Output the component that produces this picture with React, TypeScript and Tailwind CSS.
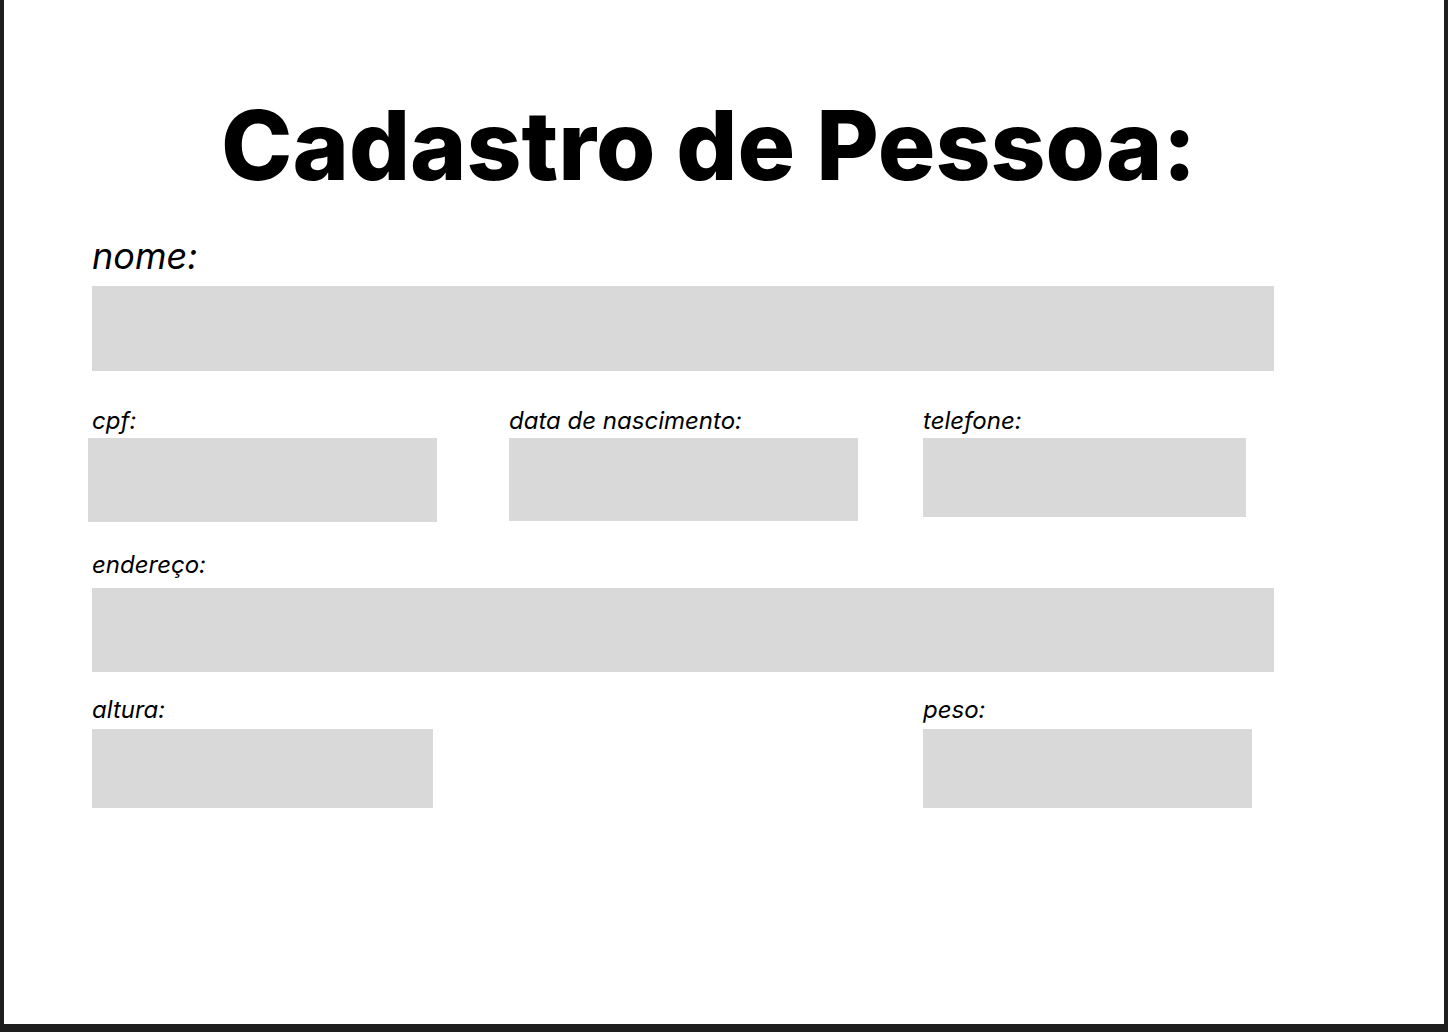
const font = { fontFamily: "Inter, 'Noto Sans', sans-serif" };

const Field = ({ label, className, boxClass }: { label: string; className?: string; boxClass: string }) => {
  return (
    <div className={className}>
      <p className="italic text-[24px] leading-none text-black">{label}</p>
      <div className={boxClass}></div>
    </div>
  );
};

const App = () => {
  return (
    <div className="bg-[#1e1e1e] w-[1448px] h-[1032px] pl-[4px] pr-[4px] pb-[8px]" style={font}>
      <div className="bg-white w-[1440px] h-[1024px] pt-[97px]">
        <h1 className="font-extrabold text-[96px] leading-none text-black pl-[217px]">Cadastro de Pessoa:</h1>

        <div className="pl-[88px] mt-[45px]">
          <p className="italic text-[36px] leading-none text-black">nome:</p>
          <div className="bg-[#d9d9d9] w-[1182px] h-[85px] mt-[12px]"></div>
        </div>

        <div className="flex items-start mt-[38px] pl-[84px]">
          <div className="w-[349px]">
            <p className="italic text-[24px] leading-none text-black pl-[4px]">cpf:</p>
            <div className="bg-[#d9d9d9] w-[349px] h-[84px] mt-[5px]"></div>
          </div>
          <Field label="data de nascimento:" className="w-[349px] ml-[72px]" boxClass="bg-[#d9d9d9] w-[349px] h-[83px] mt-[5px]" />
          <Field label="telefone:" className="w-[323px] ml-[65px]" boxClass="bg-[#d9d9d9] w-[323px] h-[79px] mt-[5px]" />
        </div>

        <div className="pl-[88px] mt-[31px]">
          <p className="italic text-[24px] leading-none text-black">endereço:</p>
          <div className="bg-[#d9d9d9] w-[1182px] h-[84px] mt-[11px]"></div>
        </div>

        <div className="flex items-start mt-[26px] pl-[88px]">
          <Field label="altura:" className="w-[341px]" boxClass="bg-[#d9d9d9] w-[341px] h-[79px] mt-[7px]" />
          <Field label="peso:" className="w-[329px] ml-[490px]" boxClass="bg-[#d9d9d9] w-[329px] h-[79px] mt-[7px]" />
        </div>
      </div>
    </div>
  );
};

export default App;
